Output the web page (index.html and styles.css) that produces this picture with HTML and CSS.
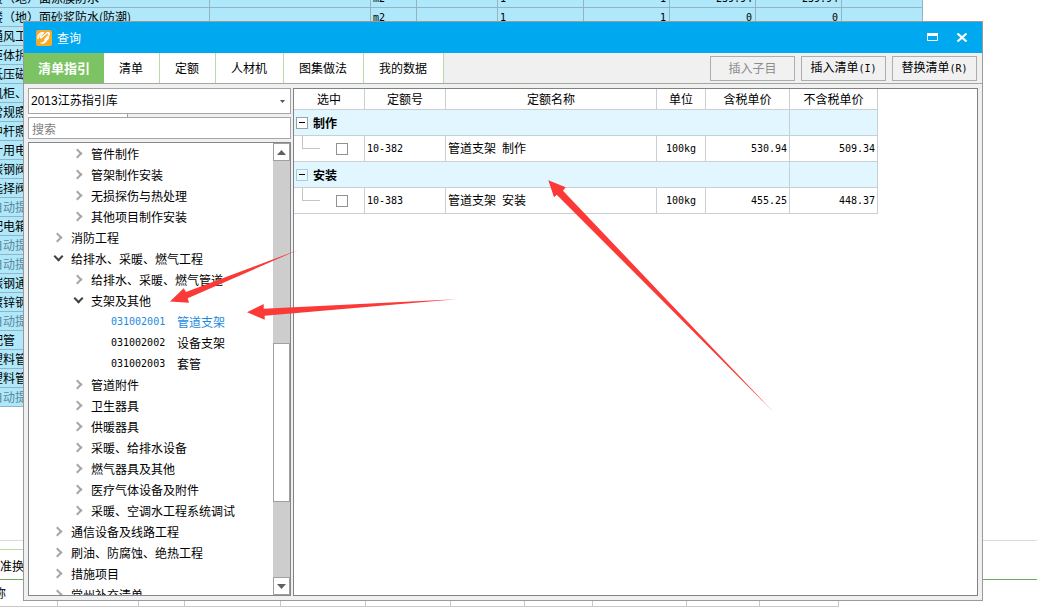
FILE: index.html
```html
<!DOCTYPE html>
<html lang="zh-CN">
<head>
<meta charset="utf-8">
<title>查询</title>
<link rel="stylesheet" href="styles.css">
</head>
<body>
<div class="app">
  <div class="sheet-clip">
    <table class="sheet">
      <colgroup><col class="s-name"><col class="s-spec"><col class="s-unit"><col class="s-qty"><col class="s-num"><col class="s-num"><col class="s-num"><col class="s-num"><col class="s-last"></colgroup>
      <tbody>
        <tr><td>楼（地）面涂膜防水</td><td></td><td class="n">m2</td><td></td><td class="n">1</td><td class="n r">1</td><td class="n r">239.94</td><td class="n r">239.94</td><td></td></tr>
        <tr><td>楼（地）面砂浆防水(防潮)</td><td></td><td class="n">m2</td><td></td><td class="n">1</td><td class="n r">1</td><td class="n r">0</td><td class="n r">0</td><td></td></tr>
        <tr><td>通风工</td><td colspan="8"></td></tr>
        <tr><td>柜体拆</td><td colspan="8"></td></tr>
        <tr><td>低压磁</td><td colspan="8"></td></tr>
        <tr><td>机柜、</td><td colspan="8"></td></tr>
        <tr><td>常规照</td><td colspan="8"></td></tr>
        <tr><td>中杆照</td><td colspan="8"></td></tr>
        <tr><td>计用电</td><td colspan="8"></td></tr>
        <tr><td>碳钢阀</td><td colspan="8"></td></tr>
        <tr><td>选择阀</td><td colspan="8"></td></tr>
        <tr class="auto"><td>自动提</td><td colspan="8"></td></tr>
        <tr><td>配电箱</td><td colspan="8"></td></tr>
        <tr class="auto"><td>自动提</td><td colspan="8"></td></tr>
        <tr class="auto"><td>自动提</td><td colspan="8"></td></tr>
        <tr><td>碳钢通</td><td colspan="8"></td></tr>
        <tr><td>镀锌钢</td><td colspan="8"></td></tr>
        <tr class="auto"><td>自动提</td><td colspan="8"></td></tr>
        <tr><td>配管</td><td colspan="8"></td></tr>
        <tr><td>塑料管</td><td colspan="8"></td></tr>
        <tr><td>塑料管</td><td colspan="8"></td></tr>
        <tr class="auto"><td>自动提</td><td colspan="8"></td></tr>
      </tbody>
    </table>
  </div>
  <div class="detail">
    <div class="detail-tabs"><span class="detail-tab">准换</span></div>
    <table class="detail-table">
      <colgroup><col class="d1"><col class="d2"><col class="d3"><col class="d4"><col class="d5"><col class="d5"><col class="d6"><col class="d7"><col class="d8"><col class="d9"><col class="d10"></colgroup>
      <tbody><tr><td>称</td><td></td><td></td><td></td><td></td><td></td><td></td><td></td><td></td><td></td><td></td></tr></tbody>
    </table>
  </div>
</div>

<section class="dialog" role="dialog" aria-labelledby="dlg-title">
  <header class="titlebar">
    <svg class="logo" viewBox="0 0 16 16" aria-hidden="true">
      <defs><linearGradient id="lg" x1="0" y1="0" x2="1" y2="1"><stop offset="0" stop-color="#f0a63c"/><stop offset="1" stop-color="#fbae17"/></linearGradient></defs>
      <rect width="16" height="16" rx="2" fill="url(#lg)"/>
      <path d="M2 8.500C1.500 5 4 2.500 7.500 2.500L4.500 6c-.8 1 0 2 1 1.500L11 3c1.500-1 3 .5 2 2L9 9.500" fill="none" stroke="#fff" stroke-width="1.600" stroke-linecap="round" stroke-linejoin="round"/>
      <path d="M3.500 12.500c1.500 1.800 4.500 1.500 6 0l3.500-4c.8-1 .5-2-.5-2.200L7 12c-1.500.8-3 .8-3.500.5z" fill="#fff"/>
    </svg>
    <h1 class="title" id="dlg-title">查询</h1>
    <button class="winbtn" aria-label="最大化"><svg width="12" height="9" viewBox="0 0 12 9"><path d="M.5.5h10v7H.5z" fill="none" stroke="#fff"/><path d="M0 0h11v3H0z" fill="#fff"/></svg></button>
    <button class="winbtn" aria-label="关闭"><svg width="12" height="9" viewBox="0 0 12 9"><path d="M1.500.5l9 8M10.500.5l-9 8" stroke="#fff" stroke-width="2.200"/></svg></button>
  </header>

  <div class="toolbar">
    <nav class="tabs" role="tablist">
      <button class="tab active" role="tab" aria-selected="true">清单指引</button>
      <button class="tab" role="tab">清单</button>
      <button class="tab" role="tab">定额</button>
      <button class="tab" role="tab">人材机</button>
      <button class="tab" role="tab">图集做法</button>
      <button class="tab" role="tab">我的数据</button>
    </nav>
    <div class="actions">
      <button class="action" disabled>插入子目</button>
      <button class="action">插入清单<span class="key">(I)</span></button>
      <button class="action">替换清单<span class="key">(R)</span></button>
    </div>
  </div>

  <div class="content">
    <aside class="side">
      <div class="combo">
        <select class="combo-select" aria-label="指引库"><option>2013江苏指引库</option></select>
        <svg class="combo-arrow" width="5" height="3" viewBox="0 0 5 3" aria-hidden="true"><path d="M0 0h5L2.500 3z" fill="#555"/></svg>
      </div>
      <div class="splitter"></div>
      <input class="search" type="text" placeholder="搜索" aria-label="搜索">
      <div class="treebox">
        <ul class="tree">
          <li class="node l2"><button class="twist" aria-label="展开"></button>管件制作</li>
          <li class="node l2"><button class="twist" aria-label="展开"></button>管架制作安装</li>
          <li class="node l2"><button class="twist" aria-label="展开"></button>无损探伤与热处理</li>
          <li class="node l2"><button class="twist" aria-label="展开"></button>其他项目制作安装</li>
          <li class="node"><button class="twist" aria-label="展开"></button>消防工程</li>
          <li class="node"><button class="twist open" aria-label="收起"></button>给排水、采暖、燃气工程</li>
          <li class="node l2"><button class="twist" aria-label="展开"></button>给排水、采暖、燃气管道</li>
          <li class="node l2"><button class="twist open" aria-label="收起"></button>支架及其他</li>
          <li class="node leaf selected"><span class="code">031002001</span>管道支架</li>
          <li class="node leaf"><span class="code">031002002</span>设备支架</li>
          <li class="node leaf"><span class="code">031002003</span>套管</li>
          <li class="node l2"><button class="twist" aria-label="展开"></button>管道附件</li>
          <li class="node l2"><button class="twist" aria-label="展开"></button>卫生器具</li>
          <li class="node l2"><button class="twist" aria-label="展开"></button>供暖器具</li>
          <li class="node l2"><button class="twist" aria-label="展开"></button>采暖、给排水设备</li>
          <li class="node l2"><button class="twist" aria-label="展开"></button>燃气器具及其他</li>
          <li class="node l2"><button class="twist" aria-label="展开"></button>医疗气体设备及附件</li>
          <li class="node l2"><button class="twist" aria-label="展开"></button>采暖、空调水工程系统调试</li>
          <li class="node"><button class="twist" aria-label="展开"></button>通信设备及线路工程</li>
          <li class="node"><button class="twist" aria-label="展开"></button>刷油、防腐蚀、绝热工程</li>
          <li class="node"><button class="twist" aria-label="展开"></button>措施项目</li>
          <li class="node"><button class="twist" aria-label="展开"></button>常州补充清单</li>
        </ul>
        <div class="scrollbar">
          <button class="scroll-btn" aria-label="向上滚动"><svg width="9" height="5" viewBox="0 0 9 5"><path d="M0 5h9L4.500 0z" fill="#606060"/></svg></button>
          <div class="track"><div class="thumb"></div></div>
          <button class="scroll-btn" aria-label="向下滚动"><svg width="9" height="5" viewBox="0 0 9 5"><path d="M0 0h9L4.500 5z" fill="#606060"/></svg></button>
        </div>
      </div>
    </aside>

    <main class="results">
      <table class="quota">
        <colgroup><col class="q-pick"><col class="q-code"><col class="q-name"><col class="q-unit"><col class="q-tax"><col class="q-net"></colgroup>
        <thead><tr><th>选中</th><th>定额号</th><th>定额名称</th><th>单位</th><th>含税单价</th><th>不含税单价</th></tr></thead>
        <tbody>
          <tr class="group"><td colspan="5"><div class="group-head"><button class="minus" aria-label="收起"></button>制作</div></td><td></td></tr>
          <tr><td><div class="pick"><span class="branch"></span><input class="check" type="checkbox" aria-label="选中 10-382"></div></td><td class="n">10-382</td><td>管道支架<span class="n"> </span>制作</td><td class="n c">100kg</td><td class="n r">530.94</td><td class="n r">509.34</td></tr>
          <tr class="group"><td colspan="5"><div class="group-head"><button class="minus pale" aria-label="收起"></button>安装</div></td><td></td></tr>
          <tr><td><div class="pick"><span class="branch"></span><input class="check" type="checkbox" aria-label="选中 10-383"></div></td><td class="n">10-383</td><td>管道支架<span class="n"> </span>安装</td><td class="n c">100kg</td><td class="n r">455.25</td><td class="n r">448.37</td></tr>
        </tbody>
      </table>
    </main>
  </div>
</section>

<svg class="arrows" width="1037" height="608" viewBox="0 0 1037 608" aria-hidden="true">
  <path d="M170 301.500 183.700 288.300 186 292 298 250 187.700 298.300 189 302.700z"/>
  <path d="M247 312.300 263.700 304 263.700 308.700 456 299.300 264.700 315.700 264.700 319.700z"/>
  <path d="M548.300 180.300 565.700 187.300 563 190.700 774 412.500 556.700 194.700 554 197.300z"/>
</svg>
</body>
</html>
```

FILE: styles.css
```css
*, *::before { box-sizing: border-box; }

body {
  margin: 0;
  height: 100vh;
  overflow: hidden;
  position: relative;
  background: #fff;
  color: #000;
  font: 12px/16px "Noto Sans CJK SC", "Liberation Sans", sans-serif;
}

button, input, select { font: inherit; color: inherit; }
button { padding: 0; }

table { border-collapse: separate; border-spacing: 0; table-layout: fixed; }
td, th { overflow: hidden; white-space: nowrap; font-weight: normal; }

.n, .code, .key { font-family: "DejaVu Sans Mono", monospace; font-size: 10px; }
.r { text-align: right; }
.c { text-align: center; }

/* Main window behind the dialog */
.app {
  height: 100vh;
  display: flex;
  flex-direction: column;
  justify-content: space-between;
  overflow: hidden;
}

.sheet-clip { margin: -11px 0 0 -11px; }
.sheet { width: 934px; background: #aee8fa; }
.sheet td {
  height: 19px;
  padding: 0 3px 0 2px;
  border: 1px solid #94b4c4;
  border-width: 0 1px 1px 0;
  line-height: 16px;
}
.sheet td.n { line-height: 12px; padding-top: 2px; }
.sheet .auto { color: #5d8797; }
.s-name { width: 221px; }
.s-spec { width: 161px; }
.s-unit { width: 46px; }
.s-qty { width: 81px; }
.s-num { width: 86px; }
.s-last { width: 81px; }

.detail { border-top: 1px solid #dcdcdc; padding: 8px 0 1px; flex: none; }
.detail-tabs { border-bottom: 1px solid #6cae5c; display: flex; }
.detail-tab {
  width: 120px;
  height: 30px;
  line-height: 32px;
  border-top: 1px solid #b4dca4;
}
.detail-table { width: 839px; }
.detail-table td {
  height: 27px;
  padding: 0;
  border: 1px solid #c8c8c8;
  border-width: 0 1px 1px 0;
}
.detail-table td:first-child { text-indent: -6px; }
.d1 { width: 58px; }
.d2 { width: 81px; }
.d3 { width: 46px; }
.d4 { width: 96px; }
.d5 { width: 85px; }
.d6 { width: 74px; }
.d7 { width: 68px; }
.d8 { width: 94px; }
.d9 { width: 73px; }
.d10 { width: 79px; }

/* Dialog window */
.dialog {
  position: absolute;
  inset: 21px 54px 7px 23px;
  display: flex;
  flex-direction: column;
  border: 1px solid #9a9a9a;
  background: #f0f0f0;
}

.titlebar {
  flex: none;
  height: 31px;
  display: flex;
  align-items: center;
  padding: 0 6px 0 12px;
  background: #00a8f0;
  color: #fff;
}
.logo { width: 16px; height: 16px; }
.title { margin: 0 auto 0 5px; font-size: 12px; line-height: 16px; font-weight: normal; }
.winbtn {
  width: 29px;
  height: 24px;
  display: grid;
  place-items: center;
  border: 0;
  background: none;
}

.toolbar {
  flex: none;
  display: flex;
  justify-content: space-between;
  align-items: center;
  height: 31px;
  padding-right: 5px;
  border-bottom: 1px solid #a0a8a0;
}
.tabs { display: flex; align-self: stretch; }
.tab {
  border: 0;
  border-right: 1px solid #b5dba6;
  padding: 0 16px 0 15px;
  background: #fff;
}
.tab.active {
  padding: 0 14px;
  border: 0;
  background: #7cc364;
  color: #fff;
  font-size: 13px;
  font-weight: bold;
}
.actions { display: flex; gap: 6px; }
.action {
  width: 85px;
  height: 25px;
  border: 1px solid #adadad;
  background: #f1f1f1;
}
.action:disabled { color: #8c8c8c; }

.content {
  flex: 1;
  min-height: 0;
  display: grid;
  grid-template-columns: 263px 1fr;
  gap: 2px;
  padding: 4px;
}

.side { display: flex; flex-direction: column; min-height: 0; }
.combo {
  flex: none;
  height: 26px;
  display: flex;
  align-items: center;
  border: 1px solid #a5a5a5;
  background: #fff;
  padding-right: 5px;
}
.combo-select {
  flex: 1;
  height: 24px;
  padding: 0 2px;
  border: 0;
  appearance: none;
  background: none;
  font-family: "Liberation Sans", "Noto Sans CJK SC", sans-serif;
}
.splitter { flex: none; width: 100px; height: 3px; border-right: 1px solid #a0a0a0; background: #fff; }
.search {
  flex: none;
  width: 100%;
  height: 22px;
  padding: 0 3px;
  border: 1px solid #a5a5a5;
  background: #fff;
}
.search::placeholder { color: #808080; opacity: 1; }

.treebox {
  flex: 1;
  min-height: 0;
  display: flex;
  margin-top: 3px;
  border: 1px solid #828790;
  background: #fff;
}
.tree {
  flex: 1;
  min-width: 0;
  margin: 0;
  padding: 0;
  list-style: none;
  overflow: hidden;
}
.node {
  display: flex;
  align-items: center;
  height: 21px;
  padding-left: 22px;
  white-space: nowrap;
}
.node.l2 { padding-left: 42px; }
.node.leaf { padding-left: 82px; }
.node.selected { color: #1b8ade; }
.code { width: 66px; }
.twist {
  width: 20px;
  height: 20px;
  display: grid;
  place-items: center;
  border: 0;
  background: none;
}
.twist::before {
  content: "";
  width: 7px;
  height: 7px;
  margin-right: 8px;
  border: solid #a6a6a6;
  border-width: 2px 2px 0 0;
  transform: rotate(45deg);
}
.twist.open::before {
  margin: 0 5px 4px 0;
  border-color: #404040;
  transform: rotate(135deg);
}

.scrollbar {
  width: 17px;
  display: flex;
  flex-direction: column;
  background: #cdcdcd;
}
.scroll-btn {
  flex: none;
  height: 18px;
  display: grid;
  place-items: center;
  border: 1px solid #a0a0a0;
  background: #fff;
}
.track { flex: 1; display: grid; grid-template-rows: 182fr 160fr 75fr; }
.thumb { grid-row: 2; border: 1px solid #a0a0a0; background: #fff; }

.results { border: 1px solid #828282; background: #fff; overflow: hidden; }
.quota { width: 584px; }
.quota th { height: 21px; padding: 0; }
.quota td { height: 26px; padding: 0 2px; }
.quota th, .quota td { border: 1px solid #c8d0d4; border-width: 0 1px 1px 0; }
.quota .group td { background: #e1f6fe; font-weight: bold; }
.q-pick { width: 71px; }
.q-code { width: 81px; }
.q-name { width: 211px; }
.q-unit { width: 49px; }
.q-tax { width: 84px; }
.q-net { width: 88px; }

.group-head { display: flex; align-items: center; gap: 5px; }
.minus {
  width: 12px;
  height: 12px;
  display: grid;
  place-items: center;
  border: 1px solid #98a0a8;
  background: #fff;
}
.minus.pale { border-color: #a6cfdc; background: #e9f9ff; }
.minus::before { content: ""; width: 6px; height: 1px; background: #000; }

.pick { display: flex; height: 25px; }
.branch {
  width: 18px;
  height: 13px;
  margin-left: 6px;
  border: 1px solid #c4c4c4;
  border-width: 0 0 1px 1px;
}
.check {
  appearance: none;
  align-self: center;
  width: 12px;
  height: 12px;
  margin: 0 0 0 16px;
  border: 1px solid #929292;
  background: #fff;
}

.arrows { position: absolute; top: 0; left: 0; pointer-events: none; fill: #fb3a37; }
```
